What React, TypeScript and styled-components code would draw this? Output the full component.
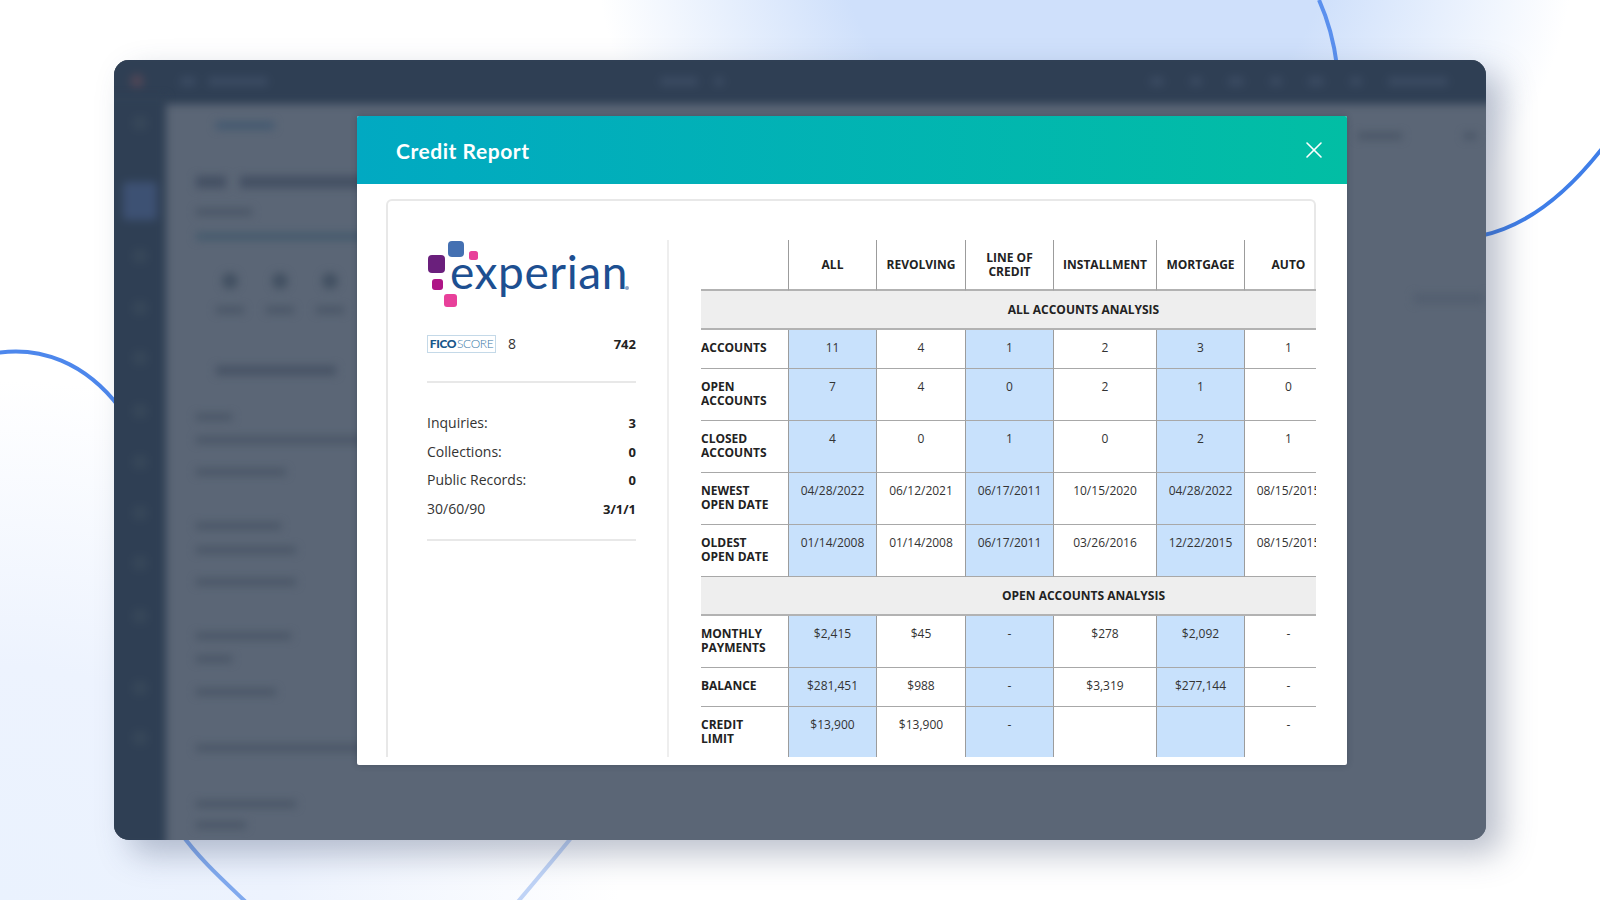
import React from "react";
import styled, {createGlobalStyle} from "styled-components";
import {X} from "lucide-react";

const GlobalStyle = createGlobalStyle`
    html, body {
        margin: 0;
        padding: 0;
        background: #fff;
    }
    * {
        box-sizing: border-box;
    }
`

type RowData = {
    label: string[]
    values: string[]
    tall?: boolean
}

const columns = [['ALL'], ['REVOLVING'], ['LINE OF', 'CREDIT'], ['INSTALLMENT'], ['MORTGAGE'], ['AUTO']]
const highlighted = [0, 2, 4]

const allAccounts: RowData[] = [
    {label: ['ACCOUNTS'], values: ['11', '4', '1', '2', '3', '1']},
    {label: ['OPEN', 'ACCOUNTS'], values: ['7', '4', '0', '2', '1', '0'], tall: true},
    {label: ['CLOSED', 'ACCOUNTS'], values: ['4', '0', '1', '0', '2', '1'], tall: true},
    {label: ['NEWEST', 'OPEN DATE'], values: ['04/28/2022', '06/12/2021', '06/17/2011', '10/15/2020', '04/28/2022', '08/15/2015'], tall: true},
    {label: ['OLDEST', 'OPEN DATE'], values: ['01/14/2008', '01/14/2008', '06/17/2011', '03/26/2016', '12/22/2015', '08/15/2015'], tall: true},
]

const openAccounts: RowData[] = [
    {label: ['MONTHLY', 'PAYMENTS'], values: ['$2,415', '$45', '-', '$278', '$2,092', '-'], tall: true},
    {label: ['BALANCE'], values: ['$281,451', '$988', '-', '$3,319', '$277,144', '-']},
    {label: ['CREDIT', 'LIMIT'], values: ['$13,900', '$13,900', '-', '', '', '-'], tall: true},
]

const summary = [
    ['Inquiries:', '3'],
    ['Collections:', '0'],
    ['Public Records:', '0'],
    ['30/60/90', '3/1/1'],
]

// gap above each blurred nav icon
const sideIcons = [0, 52, 29, 38, 36, 39, 37, 37, 36, 39, 58, 36]
const actionIcons = ['Note', 'Email', 'Call']

const fieldBlocks = [
    {top: 39, lines: [[36, 0], [190, 17], [90, 26]]},
    {top: 48, lines: [[85, 0], [100, 18], [100, 26]]},
    {top: 48, lines: [[95, 0], [36, 17], [80, 27]]},
    {top: 50, lines: [[210, 0]]},
    {top: 50, lines: [[100, 0], [50, 15]]},
]

const Lines = ({lines}: {lines: string[]}) => (
    <>
        {lines.map((line, i) => (
            <React.Fragment key={line}>
                {i > 0 && <br/>}
                {line}
            </React.Fragment>
        ))}
    </>
)

const Rows = ({rows}: {rows: RowData[]}) => (
    <>
        {rows.map((row) => (
            <tr key={row.label.join(' ')}>
                <RowLabel $tall={row.tall}><Lines lines={row.label}/></RowLabel>
                {row.values.map((value, i) => (
                    <DataCell key={i} $tall={row.tall} $blue={highlighted.includes(i)}>{value}</DataCell>
                ))}
                <SpareCell/>
            </tr>
        ))}
    </>
)

const App: React.FC = () => {
    return (
        <Page>
            <GlobalStyle/>
            <Curves viewBox="0 0 1600 900" width="1600" height="900" fill="none">
                <path d="M1319 0 C1328 20 1334 42 1337 66" stroke="#5b90ee" strokeWidth="4"/>
                <path d="M1480 236 C1530 226 1570 190 1604 146" stroke="#3f7ee8" strokeWidth="4"/>
                <path d="M-4 353 C40 346 85 362 120 408" stroke="#4d87ec" strokeWidth="4"/>
                <path d="M180 832 C200 860 225 882 248 904" stroke="#80a9ee" strokeWidth="4"/>
                <path d="M576 832 C558 854 538 878 516 904" stroke="#bfd3f6" strokeWidth="4"/>
            </Curves>
            <AppWindow>
                <BlurLayer>
                    <TopBar>
                        <RedDot/>
                        <TopBarGroup>
                            <TopBlob $w={16}/>
                            <TopBlob $w={60}/>
                        </TopBarGroup>
                        <TopBarCenter>
                            <TopBlob $w={38}/>
                            <TopBlob $w={10}/>
                        </TopBarCenter>
                        <TopBarRight>
                            <TopBlob $w={14}/>
                            <TopBlob $w={12}/>
                            <TopBlob $w={16}/>
                            <TopBlob $w={12}/>
                            <TopBlob $w={16}/>
                            <TopBlob $w={12}/>
                            <TopBlob $w={60}/>
                        </TopBarRight>
                    </TopBar>
                    <Workspace>
                        <SideBar>
                            {sideIcons.map((gap, i) => (
                                <SideIcon key={i} $active={i === 1} $gap={gap}/>
                            ))}
                        </SideBar>
                        <Content>
                            <Crumb/>
                            <ContactTitle>
                                <TitleBlob $w={30}/>
                                <TitleBlob $w={130}/>
                            </ContactTitle>
                            <FieldLine $w={56} $mt={21}/>
                            <LinkLine/>
                            <ActionRow>
                                {actionIcons.map((name) => (
                                    <ActionItem key={name}>
                                        <ActionIcon/>
                                        <FieldLine $w={28} $mt={18}/>
                                    </ActionItem>
                                ))}
                            </ActionRow>
                            <SectionTitle/>
                            {fieldBlocks.map((block, i) => (
                                <FieldBlock key={i} $top={block.top}>
                                    {block.lines.map(([w, mt], j) => (
                                        <FieldLine key={j} $w={w} $mt={mt}/>
                                    ))}
                                </FieldBlock>
                            ))}
                        </Content>
                        <RightRail>
                            <RailHeader>
                                <FieldLine $w={44} $mt={0}/>
                                <FieldLine $w={12} $mt={0}/>
                            </RailHeader>
                            <RailButton/>
                        </RightRail>
                    </Workspace>
                </BlurLayer>
                <Modal>
                    <ModalHeader>
                        <ModalTitle>Credit Report</ModalTitle>
                        <X size={28} strokeWidth={1.4} color="#fff"/>
                    </ModalHeader>
                    <ModalBody>
                        <Card>
                            <ScoreColumn>
                                <LogoRow>
                                    <LogoMarks width="44" height="70" viewBox="0 0 44 70">
                                        <rect x="21" y="1" width="16" height="16" rx="4" fill="#4470b2"/>
                                        <rect x="42" y="11" width="9" height="9" rx="2.5" fill="#e8409a"/>
                                        <rect x="1" y="15" width="17" height="18" rx="4" fill="#6a1f7c"/>
                                        <rect x="5" y="39" width="11" height="11" rx="3" fill="#ae1586"/>
                                        <rect x="17" y="54" width="13" height="13" rx="3" fill="#e8409a"/>
                                    </LogoMarks>
                                    <Wordmark>experian</Wordmark>
                                    <LogoDot/>
                                </LogoRow>
                                <FicoRow>
                                    <FicoBadge><b>FICO</b><span>SCORE</span></FicoBadge>
                                    <FicoVersion>8</FicoVersion>
                                    <FicoValue>742</FicoValue>
                                </FicoRow>
                                <Stats>
                                    {summary.map(([name, value]) => (
                                        <StatRow key={name}>
                                            <span>{name}</span>
                                            <StatValue>{value}</StatValue>
                                        </StatRow>
                                    ))}
                                </Stats>
                            </ScoreColumn>
                            <TableClip>
                                <ReportTable>
                                    <colgroup>
                                        <col width="87"/>
                                        <col width="88"/>
                                        <col width="89"/>
                                        <col width="88"/>
                                        <col width="103"/>
                                        <col width="88"/>
                                        <col width="88"/>
                                        <col width="134"/>
                                    </colgroup>
                                    <thead>
                                        <tr>
                                            <HeadBlank/>
                                            {columns.map((lines) => (
                                                <HeadCell key={lines[0]}><Lines lines={lines}/></HeadCell>
                                            ))}
                                            <SpareCell/>
                                        </tr>
                                    </thead>
                                    <tbody>
                                        <tr><SectionCell colSpan={8}>ALL ACCOUNTS ANALYSIS</SectionCell></tr>
                                        <Rows rows={allAccounts}/>
                                        <tr><SectionCell colSpan={8}>OPEN ACCOUNTS ANALYSIS</SectionCell></tr>
                                        <Rows rows={openAccounts}/>
                                    </tbody>
                                </ReportTable>
                            </TableClip>
                        </Card>
                    </ModalBody>
                </Modal>
            </AppWindow>
        </Page>
    )
}

export default App

const Page = styled.div`
    position: relative;
    width: 1600px;
    height: 900px;
    overflow: hidden;
    padding: 60px 114px;
    background:
        radial-gradient(ellipse 490px 420px at 1085px -60px, #cfe0fb 0%, #cfe0fb 50%, rgba(207, 224, 251, 0) 100%),
        radial-gradient(ellipse 620px 520px at 0 900px, #eaf2fe 0%, #edf3fe 45%, rgba(237, 243, 254, 0) 100%),
        #ffffff;
`

const Curves = styled.svg`
    position: absolute;
    top: 0;
    left: 0;
`

const AppWindow = styled.div`
    position: relative;
    width: 1372px;
    height: 780px;
    border-radius: 15px;
    background: #5b6676;
    box-shadow: 16px 14px 32px rgba(58, 72, 108, 0.34);
`

const BlurLayer = styled.div`
    width: 100%;
    height: 100%;
    border-radius: 15px;
    overflow: hidden;
    background: #5b6676;
    display: flex;
    flex-direction: column;
`

const TopBar = styled.div`
    flex: 0 0 52px;
    display: flex;
    align-items: center;
    background: #2f3f54;
    padding: 6px 46px 0 24px;
    margin: -8px -8px 0 -8px;
    filter: blur(4.5px);
`

const RedDot = styled.div`
    width: 14px;
    height: 14px;
    border-radius: 50%;
    background: #4f4656;
`

const TopBarGroup = styled.div`
    display: flex;
    gap: 12px;
    margin-left: 36px;
`

const TopBarCenter = styled.div`
    display: flex;
    gap: 16px;
    margin-left: 392px;
`

const TopBarRight = styled.div`
    display: flex;
    gap: 26px;
    margin-left: auto;
`

const TopBlob = styled.div<{$w: number}>`
    width: ${(props) => props.$w}px;
    height: 9px;
    border-radius: 3px;
    background: #3b4b62;
`

const Workspace = styled.div`
    flex: 1;
    display: flex;
    min-height: 0;
`

const SideBar = styled.div`
    flex: 0 0 60px;
    margin: -8px 0 -8px -8px;
    padding: 20px 0 0 8px;
    display: flex;
    flex-direction: column;
    align-items: center;
    background: #2f3f54;
    filter: blur(4.5px);
`

const SideIcon = styled.div<{$active?: boolean, $gap: number}>`
    flex: none;
    width: ${(props) => props.$active ? '34px' : '14px'};
    height: ${(props) => props.$active ? '38px' : '14px'};
    margin-top: ${(props) => props.$gap}px;
    border-radius: 4px;
    background: ${(props) => props.$active ? '#3d5173' : '#374759'};
`

const Content = styled.div`
    flex: 1;
    padding: 18px 0 0 30px;
    filter: blur(4.5px);
`

const Crumb = styled.div`
    width: 58px;
    height: 7px;
    margin-left: 20px;
    background: #405870;
`

const ContactTitle = styled.div`
    display: flex;
    gap: 14px;
    margin-top: 47px;
`

const TitleBlob = styled.div<{$w: number}>`
    width: ${(props) => props.$w}px;
    height: 12px;
    background: #445063;
`

const FieldLine = styled.div<{$w: number, $mt: number}>`
    width: ${(props) => props.$w}px;
    height: 6px;
    margin-top: ${(props) => props.$mt}px;
    background: #475364;
`

const LinkLine = styled.div`
    width: 170px;
    height: 7px;
    margin-top: 18px;
    background: #435a6d;
`

const ActionRow = styled.div`
    display: flex;
    gap: 22px;
    margin: 33px 0 0 20px;
`

const ActionItem = styled.div`
    display: flex;
    flex-direction: column;
    align-items: center;
`

const ActionIcon = styled.div`
    width: 16px;
    height: 16px;
    border-radius: 50%;
    background: #425061;
`

const SectionTitle = styled.div`
    width: 120px;
    height: 9px;
    margin: 53px 0 0 20px;
    background: #465264;
`

const FieldBlock = styled.div<{$top: number}>`
    margin-top: ${(props) => props.$top}px;
`

const RightRail = styled.div`
    flex: 0 0 140px;
    padding-top: 29px;
    filter: blur(4.5px);
`

const RailHeader = styled.div`
    display: flex;
    justify-content: space-between;
    padding: 0 10px 0 12px;
`

const RailButton = styled.div`
    width: 70px;
    height: 9px;
    margin: 155px 0 0 68px;
    background: #525e6f;
`

const Modal = styled.div`
    position: absolute;
    top: 56px;
    left: 243px;
    width: 990px;
    height: 649px;
    display: flex;
    flex-direction: column;
    background: #fff;
    border-radius: 2px;
    box-shadow: 0 0 6px rgba(30, 40, 60, 0.3);
`

const ModalHeader = styled.div`
    flex: 0 0 68px;
    display: flex;
    align-items: center;
    justify-content: space-between;
    padding: 0 19px 0 39px;
    background: linear-gradient(90deg, #01a9c2 0%, #02bea4 100%);
    border-radius: 2px 2px 0 0;
`

const ModalTitle = styled.div`
    font-family: "Lato", sans-serif;
    font-weight: 700;
    font-size: 21px;
    letter-spacing: 0.55px;
    color: #fff;
`

const ModalBody = styled.div`
    flex: 1;
    min-height: 0;
    padding: 15px 31px 8px 29px;
`

const Card = styled.div`
    height: 100%;
    display: flex;
    border: 2px solid #e8e8e8;
    border-bottom: none;
    border-radius: 6px 6px 0 0;
    padding: 39px 0 0 39px;
    font-family: "Open Sans", sans-serif;
    color: #333;
`

const ScoreColumn = styled.div`
    flex: 0 0 242px;
    width: 242px;
    padding-right: 31px;
    border-right: 2px solid #eeeeee;
`

const LogoRow = styled.div`
    display: flex;
    height: 70px;
    position: relative;
`

const LogoMarks = styled.svg`
    flex: none;
    overflow: visible;
`

const Wordmark = styled.div`
    margin: 7px 0 0 -21px;
    font-family: "Lato", sans-serif;
    font-weight: 400;
    font-size: 46px;
    line-height: 50px;
    letter-spacing: 0.6px;
    color: #1d4f91;
`

const LogoDot = styled.div`
    position: absolute;
    left: 198px;
    top: 46px;
    width: 4px;
    height: 4px;
    border-radius: 50%;
    background: #8aa3c7;
`

const FicoRow = styled.div`
    display: flex;
    align-items: center;
    margin-top: 24px;
    padding-bottom: 28px;
    border-bottom: 2px solid #e8e8e8;
`

const FicoBadge = styled.div`
    width: 69px;
    height: 18px;
    display: flex;
    align-items: center;
    justify-content: center;
    border: 1px solid #c4d9e8;
    font-family: "Lato", sans-serif;
    font-size: 12px;
    color: #3b79a8;
    letter-spacing: -0.4px;
    b {
        font-weight: 900;
        color: #17568a;
    }
    span {
        font-weight: 300;
        margin-left: 1px;
    }
`

const FicoVersion = styled.div`
    margin-left: 12px;
    font-size: 14px;
    color: #333;
`

const FicoValue = styled.div`
    margin-left: auto;
    font-size: 13px;
    font-weight: 700;
    color: #222;
`

const Stats = styled.div`
    padding: 26px 0 15px;
    border-bottom: 2px solid #e8e8e8;
`

const StatRow = styled.div`
    display: flex;
    justify-content: space-between;
    height: 28.7px;
    line-height: 28.7px;
    font-size: 14px;
    color: #333;
`

const StatValue = styled.span`
    font-size: 13px;
    font-weight: 700;
    color: #222;
`

const TableClip = styled.div`
    flex: 1;
    min-width: 0;
    margin: 0 -2px 0 32px;
    overflow: hidden;
`

const ReportTable = styled.table`
    table-layout: fixed;
    width: 765px;
    border-collapse: separate;
    border-spacing: 0;
    font-size: 12px;
    line-height: 14px;
    tbody tr:last-child td {
        border-bottom: none;
    }
`

const HeadBlank = styled.th`
    height: 51px;
    border-bottom: 2px solid #b2b2b2;
`

const HeadCell = styled.th`
    height: 51px;
    padding: 0;
    text-align: center;
    vertical-align: middle;
    font-weight: 700;
    color: #222;
    border-left: 1px solid #9c9c9c;
    border-bottom: 2px solid #b2b2b2;
`

const SpareCell = styled.td``

const SectionCell = styled.td`
    height: 39px;
    padding: 0;
    text-align: center;
    font-weight: 700;
    color: #222;
    background: #eeeeee;
    border-bottom: 2px solid #b2b2b2;
`

const RowLabel = styled.td<{$tall?: boolean}>`
    height: ${(props) => props.$tall ? '52px' : '39px'};
    padding: 11px 0 0;
    vertical-align: top;
    font-weight: 700;
    color: #222;
    border-bottom: 1px solid #a8a8a8;
`

const DataCell = styled.td<{$tall?: boolean, $blue?: boolean}>`
    height: ${(props) => props.$tall ? '52px' : '39px'};
    padding: 11px 0 0;
    vertical-align: top;
    text-align: center;
    color: #333;
    white-space: nowrap;
    background: ${(props) => props.$blue ? '#c8e1fc' : '#fff'};
    border-left: 1px solid #9c9c9c;
    border-bottom: 1px solid #a8a8a8;
`
